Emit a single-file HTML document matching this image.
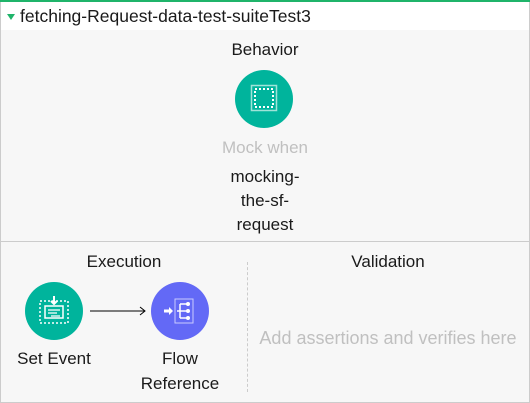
<!DOCTYPE html>
<html><head><style>
*{margin:0;padding:0;box-sizing:border-box}
body{width:530px;height:403px;background:#fff;font-family:"Liberation Sans",sans-serif;position:relative;overflow:hidden;color:#1a1a1a}
.top{position:absolute;left:0;top:0;width:530px;height:2px;background:#1fb46a}
.hdr{position:absolute;left:0;top:2px;width:530px;height:28px;background:#fff;border-left:1px solid #ccc;border-right:1px solid #ccc}
.hdr span{position:absolute;left:19px;top:4px;font-size:17.5px}
.tri{position:absolute;left:6px;top:12px;width:0;height:0;border-left:4px solid transparent;border-right:4px solid transparent;border-top:6px solid #1fb46a}
.body{position:absolute;left:0;top:30px;width:530px;height:373px;background:#f7f7f7;border:1px solid #ccc;border-top:none}
.div{position:absolute;left:0;top:241px;width:530px;height:1px;background:#ccc}
.t{position:absolute;font-size:17px;text-align:center;white-space:nowrap}
.c{position:absolute;width:58px;height:58px;border-radius:50%}
.dash{position:absolute;left:247px;top:262px;height:130px;border-left:1px dashed #ccc}
</style></head><body>
<div class="top"></div>
<div class="body"></div>
<div class="hdr"><div class="tri"></div><span>fetching-Request-data-test-suiteTest3</span></div>
<div class="t" style="left:0;width:530px;top:40px">Behavior</div>
<div class="c" style="left:235px;top:70px;background:#00b49c">
<svg width="58" height="58"><rect x="16.5" y="15.5" width="25" height="25" fill="none" stroke="#9fe3d8" stroke-width="1.5"/><rect x="20" y="19" width="18" height="18" fill="none" stroke="#fff" stroke-width="2" stroke-dasharray="2 2"/></svg></div>
<div class="t" style="left:0;width:530px;top:138px;color:#c0c0c0">Mock when</div>
<div class="t" style="left:0;width:530px;top:167px">mocking-</div>
<div class="t" style="left:0;width:530px;top:191px">the-sf-</div>
<div class="t" style="left:0;width:530px;top:215px">request</div>
<div class="div"></div>
<div class="t" style="left:54px;width:140px;top:252px">Execution</div>
<div class="t" style="left:248px;width:280px;top:252px">Validation</div>
<div class="dash"></div>
<div class="c" style="left:25px;top:282px;background:#00b49c">
<svg width="58" height="58"><rect x="15" y="19" width="28" height="22" fill="none" stroke="#fff" stroke-width="1.5" stroke-dasharray="2 2"/><rect x="20" y="24" width="18" height="12" fill="none" stroke="#fff" stroke-width="1.5"/><path d="M23 28h12M23 31h9M26 34h9" stroke="#fff" stroke-width="1.2"/><path d="M29 14v8M26 19l3 3 3-3" stroke="#fff" stroke-width="2" fill="none"/></svg></div>
<svg style="position:absolute;left:89px;top:306px" width="60" height="10"><path d="M1 5h55M51 1l5 4-5 4" stroke="#000" stroke-width="1" fill="none"/></svg>
<div class="c" style="left:151px;top:282px;background:#6369f6">
<svg width="58" height="58"><rect x="24" y="17" width="18" height="24" fill="none" stroke="#c8caff" stroke-width="1"/><path d="M13 29h6" stroke="#fff" stroke-width="3"/><path d="M18 25l4 4-4 4z" fill="#fff"/><path d="M29 22v14M29 29h7M29 22h7M29 36h7M26 29h3" stroke="#fff" stroke-width="1.5" fill="none"/><circle cx="37" cy="22" r="2" fill="#fff"/><circle cx="37" cy="29" r="2" fill="#fff"/><circle cx="37" cy="36" r="2" fill="#fff"/></svg></div>
<div class="t" style="left:4px;width:100px;top:349px">Set Event</div>
<div class="t" style="left:130px;width:100px;top:349px">Flow</div>
<div class="t" style="left:130px;width:100px;top:374px">Reference</div>
<div class="t" style="left:248px;width:280px;top:328px;color:#c0c0c0;font-size:18px">Add assertions and verifies here</div>
</body></html>
